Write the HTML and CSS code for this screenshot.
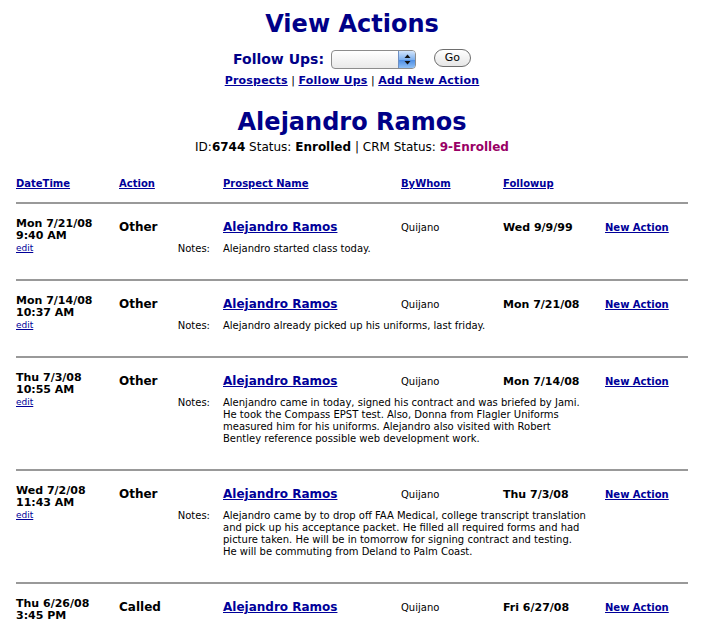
FILE: index.html
```html
<!DOCTYPE html>
<html lang="en">
<head>
    <meta charset="UTF-8">
    <title>View Actions</title>
    <link rel="stylesheet" href="styles.css">
</head>
<body>
    <div class="page">
        <h1>View Actions</h1>

        <form class="filter">
            <label for="followups">Follow Ups:</label>
            <span class="select" id="followups">
                <span class="select-arrows">
                    <svg width="17" height="17" viewBox="0 0 17 17">
                        <path d="M5.5 7 L8.5 3.5 L11.5 7 Z" fill="#111"/>
                        <path d="M5.5 10 L8.5 13.5 L11.5 10 Z" fill="#111"/>
                    </svg>
                </span>
            </span>
            <button type="button" class="go">Go</button>
        </form>

        <div class="nav">
            <a href="#">Prospects</a> | <a href="#">Follow Ups</a> | <a href="#">Add New Action</a>
        </div>

        <h2>Alejandro Ramos</h2>
        <div class="ident">ID:<b>6744</b> Status: <b>Enrolled</b> | CRM Status: <b class="crm">9-Enrolled</b></div>

        <div class="actions">
            <div class="row head">
                <a href="#">DateTime</a>
                <a href="#">Action</a>
                <a href="#">Prospect Name</a>
                <a href="#">ByWhom</a>
                <a href="#">Followup</a>
                <span></span>
            </div>

            <div class="row record">
                <div class="when">Mon 7/21/08<br>9:40 AM<br><a class="edit" href="#">edit</a></div>
                <div class="action">Other</div>
                <a class="name" href="#">Alejandro Ramos</a>
                <div class="by">Quijano</div>
                <div class="follow">Wed 9/9/99</div>
                <a class="new" href="#">New Action</a>
                <div class="notes-label">Notes:</div>
                <div class="notes">Alejandro started class today.</div>
            </div>

            <div class="row record">
                <div class="when">Mon 7/14/08<br>10:37 AM<br><a class="edit" href="#">edit</a></div>
                <div class="action">Other</div>
                <a class="name" href="#">Alejandro Ramos</a>
                <div class="by">Quijano</div>
                <div class="follow">Mon 7/21/08</div>
                <a class="new" href="#">New Action</a>
                <div class="notes-label">Notes:</div>
                <div class="notes">Alejandro already picked up his uniforms, last friday.</div>
            </div>

            <div class="row record">
                <div class="when">Thu 7/3/08<br>10:55 AM<br><a class="edit" href="#">edit</a></div>
                <div class="action">Other</div>
                <a class="name" href="#">Alejandro Ramos</a>
                <div class="by">Quijano</div>
                <div class="follow">Mon 7/14/08</div>
                <a class="new" href="#">New Action</a>
                <div class="notes-label">Notes:</div>
                <div class="notes">Alenjandro came in today, signed his contract and was briefed by Jami.<br>He took the Compass EPST test. Also, Donna from Flagler Uniforms<br>measured him for his uniforms. Alejandro also visited with Robert<br>Bentley reference possible web development work.</div>
            </div>

            <div class="row record">
                <div class="when">Wed 7/2/08<br>11:43 AM<br><a class="edit" href="#">edit</a></div>
                <div class="action">Other</div>
                <a class="name" href="#">Alejandro Ramos</a>
                <div class="by">Quijano</div>
                <div class="follow">Thu 7/3/08</div>
                <a class="new" href="#">New Action</a>
                <div class="notes-label">Notes:</div>
                <div class="notes">Alejandro came by to drop off FAA Medical, college transcript translation<br>and pick up his acceptance packet. He filled all required forms and had<br>picture taken. He will be in tomorrow for signing contract and testing.<br>He will be commuting from Deland to Palm Coast.</div>
            </div>

            <div class="row record">
                <div class="when">Thu 6/26/08<br>3:45 PM<br><a class="edit" href="#">edit</a></div>
                <div class="action">Called</div>
                <a class="name" href="#">Alejandro Ramos</a>
                <div class="by">Quijano</div>
                <div class="follow">Fri 6/27/08</div>
                <a class="new" href="#">New Action</a>
                <div class="notes-label">Notes:</div>
                <div class="notes">Called to confirm his start date.</div>
            </div>
        </div>
    </div>
</body>
</html>
```

FILE: styles.css
```css
/* Palette and reset */
:root {
    --navy: #000088;
    --link: #000099;
    --rule: #999999;
    --crm: #990066;
}

* {
    margin: 0;
    padding: 0;
    box-sizing: border-box;
}

body {
    font-family: "DejaVu Sans", Verdana, sans-serif;
    font-size: 10px;
    color: #000;
    background: #fff;
}

a {
    color: var(--link);
}

.page {
    width: 672px;
    margin-left: 16px;
    padding-top: 10px;
}

h1, h2 {
    font-size: 24px;
    line-height: 28px;
    color: var(--navy);
    text-align: center;
}

h2 {
    margin-top: 20px;
}

/* Follow ups picker */
.filter {
    display: flex;
    justify-content: center;
    align-items: center;
    height: 22px;
    margin-top: 10px;
}

.filter label {
    font-size: 14px;
    font-weight: bold;
    color: var(--navy);
    margin-right: 7px;
}

.select {
    display: flex;
    justify-content: flex-end;
    width: 85px;
    height: 19px;
    border: 1px solid #8c8c8c;
    border-radius: 4px;
    background: linear-gradient(#ffffff, #e9e9e9);
    overflow: hidden;
    margin-right: 18px;
}

.select-arrows {
    width: 17px;
    height: 17px;
    border-left: 1px solid #6d8fc4;
    background: linear-gradient(#d3e5fb, #7fb1ee 50%, #4a8be4 51%, #8fc0f6);
}

.select-arrows svg {
    display: block;
}

.go {
    width: 37px;
    height: 18px;
    margin-top: -3px;
    border: 1px solid #6e6e6e;
    border-radius: 9px;
    background: linear-gradient(#ffffff, #e6e6e6);
    font-family: "DejaVu Sans", sans-serif;
    font-size: 11px;
    color: #000;
}

.nav {
    margin-top: 4px;
    text-align: center;
    font-size: 11px;
    line-height: 14px;
}

.nav a {
    font-weight: bold;
    letter-spacing: 0.2px;
}

.ident {
    margin-top: 4px;
    text-align: center;
    font-size: 12px;
    line-height: 14px;
}

.crm {
    color: var(--crm);
}

/* Actions list */
.row {
    display: grid;
    grid-template-columns: 103px 104px 178px 102px 102px 83px;
}

.head {
    margin-top: 23px;
    padding-bottom: 11px;
    line-height: 14px;
    font-weight: bold;
}

.record {
    grid-template-rows: 20px auto;
    row-gap: 6px;
    padding: 13px 0 24px;
    border-top: 2px solid var(--rule);
}

.when {
    grid-column: 1;
    grid-row: 1 / 3;
    padding-top: 1px;
    font-size: 11px;
    font-weight: bold;
    line-height: 12px;
}

.edit {
    display: inline-block;
    font-size: 9px;
    font-weight: normal;
    line-height: 13px;
}

.action, .name, .by, .follow, .new {
    align-self: center;
}

.action, .name {
    font-size: 12px;
    font-weight: bold;
}

.follow {
    font-size: 11px;
    font-weight: bold;
}

.new {
    font-weight: bold;
}

.notes-label {
    grid-column: 2;
    grid-row: 2;
    text-align: right;
    padding-right: 13px;
    line-height: 12px;
}

.notes {
    grid-column: 3 / 7;
    grid-row: 2;
    line-height: 12px;
    white-space: nowrap;
}
```
